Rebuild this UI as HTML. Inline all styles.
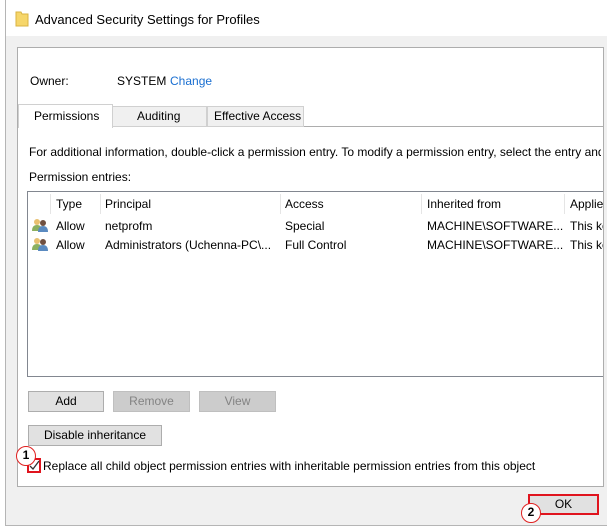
<!DOCTYPE html>
<html><head><style>
*{box-sizing:border-box;margin:0;padding:0}
body{width:607px;height:530px;background:#fff;font-family:"Liberation Sans",sans-serif;font-size:12px;color:#000;position:relative;overflow:hidden}
.a{position:absolute;white-space:nowrap}
.btn{position:absolute;background:#e1e1e1;border:1px solid #adadad;text-align:center;line-height:18px;font-size:12px}
.dis{color:#838383;background:#ccc;border-color:#bfbfbf}
.circ{position:absolute;width:20px;height:20px;border-radius:50%;background:#fff;border:1.5px solid #e02020;font-weight:bold;font-size:12px;text-align:center;line-height:17px}
</style></head><body>
<div class="a" style="left:5px;top:0;width:602px;height:526px;border-left:1px solid #b5b5b5;border-bottom:1px solid #b5b5b5;background:#f0f0f0"></div>
<div class="a" style="left:6px;top:0;width:601px;height:36px;background:#fff"></div>
<svg class="a" style="left:15px;top:11px" width="14" height="16"><path d="M1 1h5l1 2h6v12H1z" fill="#f6d66a" stroke="#d9b342" stroke-width="1"/></svg>
<div class="a" style="left:35px;top:12px;font-size:13px">Advanced Security Settings for Profiles</div>
<div class="a" style="left:17px;top:47px;width:587px;height:440px;background:#fff;border:1px solid #adadad"></div>
<div class="a" style="left:30px;top:74px">Owner:</div>
<div class="a" style="left:117px;top:74px">SYSTEM</div>
<div class="a" style="left:170px;top:74px;color:#1a6fd1">Change</div>
<div class="a" style="left:18px;top:126px;width:585px;height:1px;background:#adadad"></div>
<div class="a" style="left:112px;top:106px;width:95px;height:21px;background:#f0f0f0;border:1px solid #d0d0d0"></div>
<div class="a" style="left:207px;top:106px;width:97px;height:21px;background:#f0f0f0;border:1px solid #d0d0d0"></div>
<div class="a" style="left:18px;top:104px;width:95px;height:24px;background:#fff;border:1px solid #d0d0d0;border-bottom:none"></div>
<div class="a" style="left:34px;top:109px">Permissions</div>
<div class="a" style="left:137px;top:109px">Auditing</div>
<div class="a" style="left:214px;top:109px">Effective Access</div>
<div class="a" style="left:29px;top:145px;width:572px;overflow:hidden">For additional information, double-click a permission entry. To modify a permission entry, select the entry and click Edit.</div>
<div class="a" style="left:29px;top:170px">Permission entries:</div>
<div class="a" style="left:27px;top:191px;width:576px;height:186px;border:1px solid #828790;border-right:none;background:#fff;overflow:hidden">
 <div class="a" style="left:22px;top:2px;width:1px;height:20px;background:#e5e5e5"></div>
 <div class="a" style="left:72px;top:2px;width:1px;height:20px;background:#e5e5e5"></div>
 <div class="a" style="left:252px;top:2px;width:1px;height:20px;background:#e5e5e5"></div>
 <div class="a" style="left:393px;top:2px;width:1px;height:20px;background:#e5e5e5"></div>
 <div class="a" style="left:536px;top:2px;width:1px;height:20px;background:#e5e5e5"></div>
 <div class="a" style="left:28px;top:5px">Type</div>
 <div class="a" style="left:77px;top:5px">Principal</div>
 <div class="a" style="left:257px;top:5px">Access</div>
 <div class="a" style="left:399px;top:5px">Inherited from</div>
 <div class="a" style="left:542px;top:5px">Applies to</div>
 <svg class="a" style="left:4px;top:26px" width="16" height="14"><circle cx="5" cy="4" r="3" fill="#e8c070"/><path d="M0 13q0-6 5-6t5 6z" fill="#8cb060"/><circle cx="11" cy="5" r="3" fill="#705040"/><path d="M6 14q0-6 5-6t5 6z" fill="#5a8ac0"/></svg>
 <svg class="a" style="left:4px;top:45px" width="16" height="14"><circle cx="5" cy="4" r="3" fill="#e8c070"/><path d="M0 13q0-6 5-6t5 6z" fill="#8cb060"/><circle cx="11" cy="5" r="3" fill="#705040"/><path d="M6 14q0-6 5-6t5 6z" fill="#5a8ac0"/></svg>
 <div class="a" style="left:28px;top:27px">Allow</div><div class="a" style="left:77px;top:27px">netprofm</div><div class="a" style="left:257px;top:27px">Special</div><div class="a" style="left:399px;top:27px">MACHINE\SOFTWARE...</div><div class="a" style="left:542px;top:27px">This key</div>
 <div class="a" style="left:28px;top:46px">Allow</div><div class="a" style="left:77px;top:46px">Administrators (Uchenna-PC\...</div><div class="a" style="left:257px;top:46px">Full Control</div><div class="a" style="left:399px;top:46px">MACHINE\SOFTWARE...</div><div class="a" style="left:542px;top:46px">This key</div>
</div>
<div class="btn" style="left:28px;top:391px;width:76px;height:21px">Add</div>
<div class="btn dis" style="left:113px;top:391px;width:77px;height:21px">Remove</div>
<div class="btn dis" style="left:199px;top:391px;width:77px;height:21px">View</div>
<div class="btn" style="left:28px;top:425px;width:134px;height:21px">Disable inheritance</div>
<div class="a" style="left:27px;top:458px;width:14px;height:15px;border:2px solid #e0141e;background:#fff"></div>
<svg class="a" style="left:29px;top:460px" width="11" height="11"><path d="M1 6l3 3 6-8" stroke="#333" stroke-width="1.3" fill="none"/></svg>
<div class="circ" style="left:16px;top:446px">1</div>
<div class="a" style="left:43px;top:459px">Replace all child object permission entries with inheritable permission entries from this object</div>
<div class="a" style="left:528px;top:494px;width:71px;height:21px;border:2px solid #e0141e;background:#e1e1e1;text-align:center;line-height:17px">OK</div>
<div class="circ" style="left:521px;top:503px">2</div>
</body></html>
